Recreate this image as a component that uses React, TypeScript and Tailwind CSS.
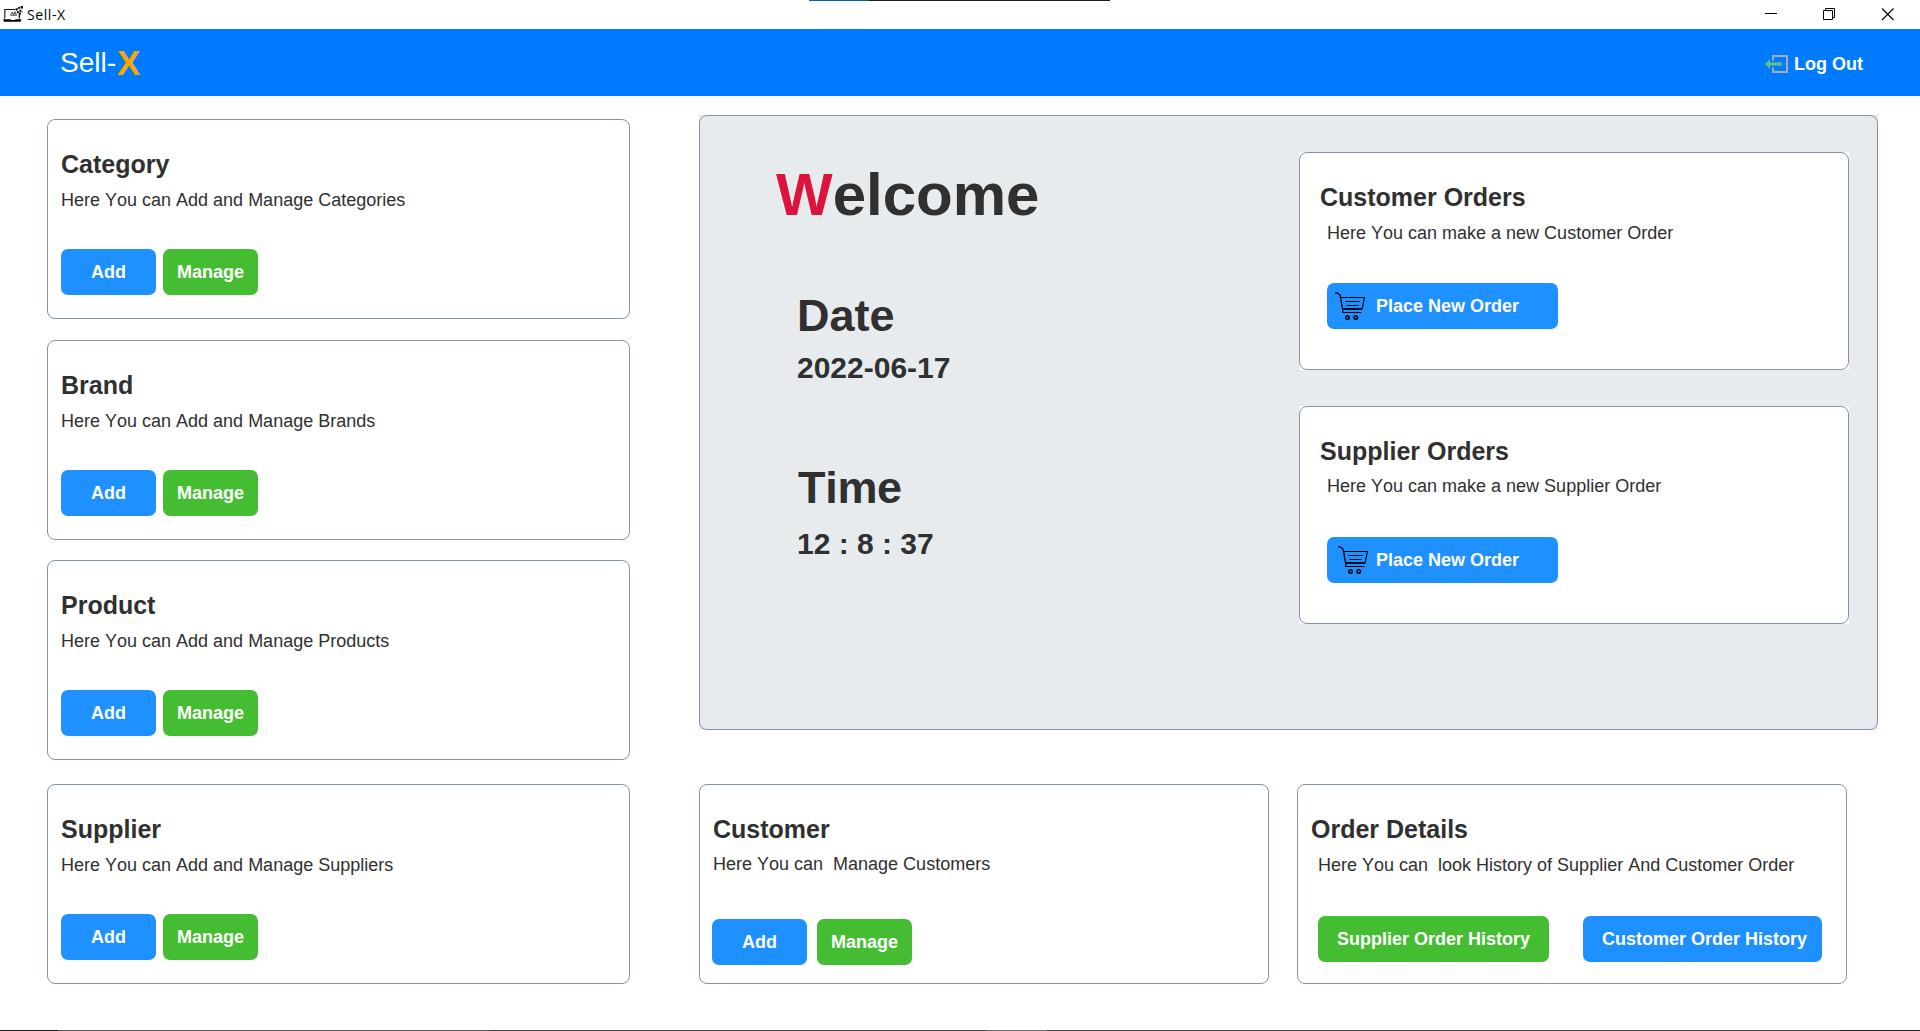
import React from "react";

function ShopIcon() {
  return (
    <svg className="h-[16px] w-[20px]" viewBox="0 0 20 16">
      <path d="M1.8 12.5V3.5H12" fill="none" stroke="#111" strokeWidth="1.1" />
      <path d="M16.4 9v3.5" stroke="#111" strokeWidth="1.3" />
      <path d="M0 13.2h7.5l.6.8h3.8l.6-.8H18.5L17.6 15.8H1z" fill="#000" />
      <path d="M7.2 9.5l2.2-3.6 1.200 3.200 1.400-3.400 1.400 3.400M8 9.200h6" fill="none" stroke="#333" strokeWidth="0.9" />
      <path d="M12.600 2.2h2.2v2.2h-2.200zM15.2 1h1.800v1.800h-1.800zM17.600 0h2.400v2.600h-2.400zM16.400 3.700h2v2h-2zM13.800 5.200h1.800v1.800h-1.800zM15.600 6.600h2.200v2.200h-2.200zM18.600 5.600h1v1h-1z" fill="#000" />
    </svg>
  );
}

function LogoutIcon() {
  return (
    <svg className="h-[20px] w-[24px]" viewBox="0 0 24 20">
      <path d="M8 6.500V2H22V18H8V13.500" fill="none" stroke="#a9abad" strokeWidth="2" />
      <path d="M0 10L5 5V8.500H17V11.500H5V15z" fill="#5fc27e" />
    </svg>
  );
}

function CartIcon() {
  return (
    <svg className="h-[30px] w-[32px]" viewBox="9 11 32 30" fill="none" stroke="#000">
      <path d="M10 12.8h2.2l2.6 2 .8 2.7 1.9 11.5" strokeWidth="1.3" />
      <path d="M15.2 17.5H39.4L37.2 28.5" strokeWidth="1.2" />
      <path d="M17 29H37.4" strokeWidth="1.8" />
      <path d="M17.8 29v3.5H36.4" strokeWidth="1.1" />
      <path d="M20.5 21.5H34.5M21.5 25.5H33.5" strokeWidth="1" />
      <circle cx="22.5" cy="37.5" r="1.8" strokeWidth="1.4" />
      <circle cx="30.7" cy="37.5" r="1.8" strokeWidth="1.4" />
    </svg>
  );
}

type ButtonProps = { tone: "blue" | "green"; className: string; children: React.ReactNode };

function Button({ tone, className, children }: ButtonProps) {
  const color = tone === "blue" ? "bg-[#1e90ff]" : "bg-[#45bd32]";
  return (
    <button
      className={`flex h-[46px] shrink-0 items-center rounded-[7px] text-[18px] leading-5 font-bold whitespace-nowrap text-white ${color} ${className}`}
    >
      {children}
    </button>
  );
}

type CardProps = {
  title: string;
  text: string;
  className: string;
  pad: string;
  titleClass?: string;
  textClass?: string;
  actionsClass: string;
  children: React.ReactNode;
};

function Card({ title, text, className, pad, titleClass = "", textClass = "mt-3", actionsClass, children }: CardProps) {
  return (
    <section className={`shrink-0 bg-white ${className}`}>
      <div className={`h-full rounded-[8px] border border-[#8492ae] pt-[30px] ${pad}`}>
        <h2 className={`text-[25px] leading-7 font-bold ${titleClass}`}>{title}</h2>
        <p className={`text-[18px] leading-5 whitespace-pre ${textClass}`}>{text}</p>
        <div className={`flex ${actionsClass}`}>{children}</div>
      </div>
    </section>
  );
}

const sections = [
  { title: "Category", text: "Here You can Add and Manage Categories", gap: "h-[200px]" },
  { title: "Brand", text: "Here You can Add and Manage Brands", gap: "mt-[21px] h-[200px]" },
  { title: "Product", text: "Here You can Add and Manage Products", gap: "mt-5 h-[200px]" },
  { title: "Supplier", text: "Here You can Add and Manage Suppliers", gap: "mt-6 h-[200px]" },
];

export default function App() {
  return (
    <div className="flex h-[1031px] w-[1920px] flex-col overflow-hidden bg-white font-['Liberation_Sans',Arial,sans-serif] text-[#303030] [font-kerning:none]">
      <div className="flex h-px shrink-0 pl-[809px]">
        <div className="w-[60px] bg-[#0063b1]" />
        <div className="w-[241px] bg-[#1f1f1f]" />
      </div>
      <div className="flex h-7 shrink-0 items-start justify-between pr-[26px] pl-[3px]">
        <div className="flex gap-1 pt-[5px]">
          <ShopIcon />
          <span className="text-[14px] leading-[17px] tracking-[0.6px] text-black font-['Open_Sans','Noto_Sans',sans-serif]">Sell-X</span>
        </div>
        <svg className="mt-1.5 h-4 w-[130px]" viewBox="0 0 130 16" fill="none" stroke="#000">
          <path d="M1 6.5H13" />
          <path d="M59.5 3.5H68.5V12.5H59.5zM61.5 3.5V1.5H70.5V10.5H68.5" />
          <path d="M118 1.5L129.500 13M129.500 1.500L118 13" strokeWidth="1.1" />
        </svg>
      </div>

      <header className="flex h-[67px] shrink-0 items-start justify-between bg-[#007bff] pr-[57px] pl-[60px] text-white">
        <div className="flex items-baseline pt-[15px]">
          <span className="pb-1 text-[28px] leading-8">Sell-</span>
          <span className="relative top-[3px] ml-px text-[35px] leading-8 font-bold text-[#ffa500]">X</span>
        </div>
        <div className="mt-[25px] flex items-center gap-[5px]">
          <LogoutIcon />
          <span className="text-[18px] leading-5 font-bold">Log Out</span>
        </div>
      </header>

      <main className="flex grow gap-[69px] pl-[47px]">
        <div className="flex w-[583px] shrink-0 flex-col pt-[23px]">
          {sections.map((s) => (
            <Card key={s.title} title={s.title} text={s.text} className={s.gap} pad="pl-[13px]" actionsClass="mt-[39px] gap-[7px]">
              <Button tone="blue" className="w-[95px] justify-center">Add</Button>
              <Button tone="green" className="w-[95px] justify-center">Manage</Button>
            </Card>
          ))}
        </div>

        <div className="flex w-[1179px] shrink-0 flex-col pt-[19px]">
          <section className="h-[615px] shrink-0 bg-[#e7ebee]">
            <div className="flex h-full justify-between rounded-[8px] border border-[#8492ae] pr-7">
              <div className="pt-[45px] pl-[97px] font-bold">
                <h1 className="-ml-[21px] flex text-[60px] leading-[67px]">
                  <span className="text-[#dc143c]">W</span>
                  <span>elcome</span>
                </h1>
                <h2 className="mt-[62px] text-[45px] leading-[51px]">Date</h2>
                <p className="mt-2.5 text-[30px] leading-[33px]">2022-06-17</p>
                <h2 className="mt-[78px] ml-px text-[45px] leading-[51px] tracking-[-0.3px]">Time</h2>
                <p className="mt-3.5 text-[30px] leading-[33px]">12 : 8 : 37</p>
              </div>
              <div className="flex flex-col gap-9 pt-9">
                <Card
                  title="Customer Orders"
                  text="Here You can make a new Customer Order"
                  className="h-[218px] w-[550px]"
                  pad="pl-[27px]"
                  titleClass="-ml-[7px]"
                  actionsClass="mt-10"
                >
                  <Button tone="blue" className="w-[231px] pl-[7px]">
                    <CartIcon />
                    <span className="ml-2.5">Place New Order</span>
                  </Button>
                </Card>
                <Card
                  title="Supplier Orders"
                  text="Here You can make a new Supplier Order"
                  className="h-[218px] w-[550px]"
                  pad="pl-[27px]"
                  titleClass="-ml-[7px]"
                  textClass="mt-[11px]"
                  actionsClass="mt-[41px]"
                >
                  <Button tone="blue" className="w-[231px] pl-2.5">
                    <CartIcon />
                    <span className="ml-[7px]">Place New Order</span>
                  </Button>
                </Card>
              </div>
            </div>
          </section>

          <div className="mt-[54px] flex gap-7">
            <Card
              title="Customer"
              text="Here You can  Manage Customers"
              className="h-[200px] w-[570px]"
              pad="pl-[13px]"
              textClass="mt-[11px]"
              actionsClass="-ml-px mt-[45px] gap-2.5"
            >
              <Button tone="blue" className="w-[95px] justify-center">Add</Button>
              <Button tone="green" className="w-[95px] justify-center">Manage</Button>
            </Card>
            <Card
              title="Order Details"
              text="Here You can  look History of Supplier And Customer Order"
              className="h-[200px] w-[550px]"
              pad="pl-5"
              titleClass="-ml-[7px]"
              actionsClass="mt-[41px] gap-[34px]"
            >
              <Button tone="green" className="w-[231px] justify-center">Supplier Order History</Button>
              <Button tone="blue" className="w-[239px] pl-[19px]">Customer Order History</Button>
            </Card>
          </div>
        </div>
      </main>

      <div className="flex h-px shrink-0 bg-[#444446]">
        <div className="w-[58px] shrink-0 bg-[#1c1c1e]" />
        <div className="w-[431px] shrink-0 bg-[#5c5c5c]" />
        <div className="ml-[497px] w-[61px] shrink-0 bg-[#6c6c6c]" />
        <div className="ml-[793px] w-[80px] shrink-0 bg-[#222224]" />
      </div>
    </div>
  );
}
